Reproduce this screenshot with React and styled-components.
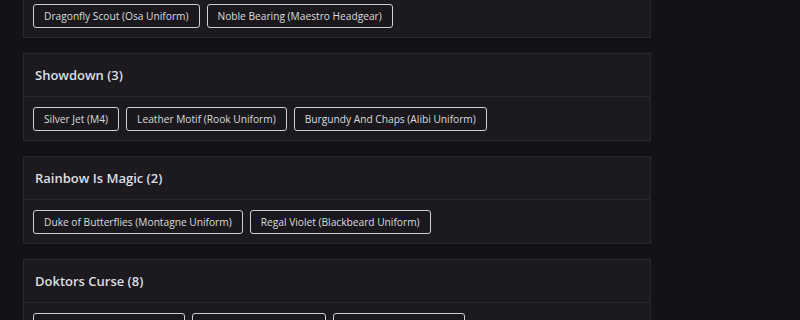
import React from 'react';
import styled, { createGlobalStyle } from 'styled-components';

const GlobalStyle = createGlobalStyle`
  html, body {
    margin: 0;
    padding: 0;
    background: #141216;
    font-family: "Open Sans", "Liberation Sans", sans-serif;
    overflow: hidden;
  }
`;

const Page = styled.div`
  width: 800px;
  height: 320px;
  overflow: hidden;
  background: #141216;
`;

const List = styled.div`
  display: flex;
  flex-direction: column;
  gap: 15px;
  width: 628px;
  margin: -50px 0 0 23px;
`;

const Card = styled.section`
  background: #1c1a1e;
  border: 1px solid #2a282d;
  display: flex;
  flex-direction: column;
`;

const Header = styled.div`
  height: 42px;
  display: flex;
  align-items: center;
  padding: 0 11px;
  border-bottom: 1px solid #2a282d;
  color: #dedee1;
  font-size: 13px;
  font-weight: 600;
`;

const Body = styled.div`
  display: flex;
  flex-wrap: wrap;
  gap: 7px;
  padding: 10px 9px 9px;
`;

const Tag = styled.button`
  height: 24px;
  padding: 0 10px;
  background: #1a181c;
  border: 1px solid #cfcfd2;
  border-radius: 3px;
  color: #dcdcde;
  font-family: inherit;
  font-size: 10.2px;
  line-height: 22px;
  white-space: nowrap;
  cursor: pointer;
`;

const sections = [
  { title: 'Event', items: ['Dragonfly Scout (Osa Uniform)', 'Noble Bearing (Maestro Headgear)'] },
  { title: 'Showdown (3)', items: ['Silver Jet (M4)', 'Leather Motif (Rook Uniform)', 'Burgundy And Chaps (Alibi Uniform)'] },
  { title: 'Rainbow Is Magic (2)', items: ['Duke of Butterflies (Montagne Uniform)', 'Regal Violet (Blackbeard Uniform)'] },
  { title: 'Doktors Curse (8)', items: ['Hyde Transformed (Smoke)', 'Stitched (Echo Uniform)', 'Old Doll (Mira Uniform)'] },
];

export default function App() {
  return (
    <Page>
      <GlobalStyle />
      <List>
        {sections.map((s) => (
          <Card key={s.title}>
            <Header>{s.title}</Header>
            <Body>
              {s.items.map((it) => (
                <Tag key={it}>{it}</Tag>
              ))}
            </Body>
          </Card>
        ))}
      </List>
    </Page>
  );
}
